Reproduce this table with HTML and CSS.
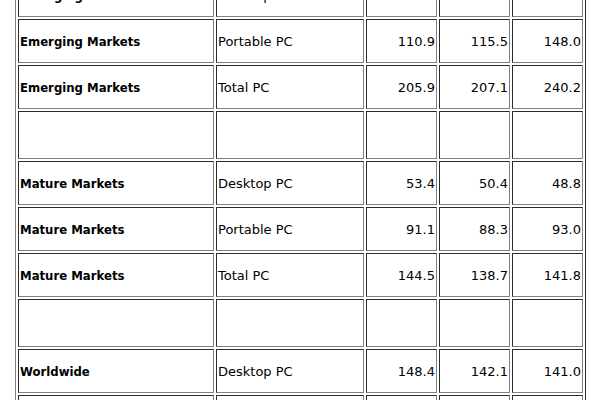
FILE: index.html
```html
<!DOCTYPE html>
<html lang="en">
<head>
    <meta charset="UTF-8">
    <title>PC Shipments by Market</title>
    <link rel="stylesheet" href="styles.css">
</head>
<body>
    <!-- PC shipments table (scrolled part way down) -->
    <table class="data-table">
        <tr>
            <td class="market">Emerging Markets</td>
            <td>Desktop PC</td>
            <td class="num">95.0</td>
            <td class="num">91.6</td>
            <td class="num">92.2</td>
        </tr>
        <tr>
            <td class="market">Emerging Markets</td>
            <td>Portable PC</td>
            <td class="num">110.9</td>
            <td class="num">115.5</td>
            <td class="num">148.0</td>
        </tr>
        <tr>
            <td class="market">Emerging Markets</td>
            <td>Total PC</td>
            <td class="num">205.9</td>
            <td class="num">207.1</td>
            <td class="num">240.2</td>
        </tr>
        <tr class="spacer">
            <td></td><td></td><td></td><td></td><td></td>
        </tr>
        <tr>
            <td class="market">Mature Markets</td>
            <td>Desktop PC</td>
            <td class="num">53.4</td>
            <td class="num">50.4</td>
            <td class="num">48.8</td>
        </tr>
        <tr>
            <td class="market">Mature Markets</td>
            <td>Portable PC</td>
            <td class="num">91.1</td>
            <td class="num">88.3</td>
            <td class="num">93.0</td>
        </tr>
        <tr>
            <td class="market">Mature Markets</td>
            <td>Total PC</td>
            <td class="num">144.5</td>
            <td class="num">138.7</td>
            <td class="num">141.8</td>
        </tr>
        <tr class="spacer">
            <td></td><td></td><td></td><td></td><td></td>
        </tr>
        <tr>
            <td class="market">Worldwide</td>
            <td>Desktop PC</td>
            <td class="num">148.4</td>
            <td class="num">142.1</td>
            <td class="num">141.0</td>
        </tr>
        <tr>
            <td class="market">Worldwide</td>
            <td>Portable PC</td>
            <td class="num">202.0</td>
            <td class="num">203.8</td>
            <td class="num">241.0</td>
        </tr>
    </table>
</body>
</html>
```

FILE: styles.css
```css
/* General Styles */
body {
    margin: 0;
    background-color: #fff;
    font-family: "DejaVu Sans", Verdana, sans-serif;
    font-size: 13px;
    color: #000;
    overflow: hidden;
}

/* Table Styles */
.data-table {
    width: 571px;
    margin: -30px 0 0 15px;
    table-layout: fixed;
    border: 1px outset grey;
    border-spacing: 2px;
}

.data-table td {
    box-sizing: border-box;
    height: 44px;
    padding: 1px;
    border: 1px inset grey;
    vertical-align: middle;
    white-space: nowrap;
}

.data-table td:nth-child(1) {
    width: 196px;
}

.data-table td:nth-child(2) {
    width: 148px;
}

.data-table td:nth-child(n+3) {
    width: 71px;
}

.market {
    font-family: "DejaVu Sans Condensed", "DejaVu Sans", sans-serif;
    font-stretch: condensed;
    font-weight: bold;
}

.num {
    text-align: right;
}

.spacer td {
    height: 48px;
}
```
